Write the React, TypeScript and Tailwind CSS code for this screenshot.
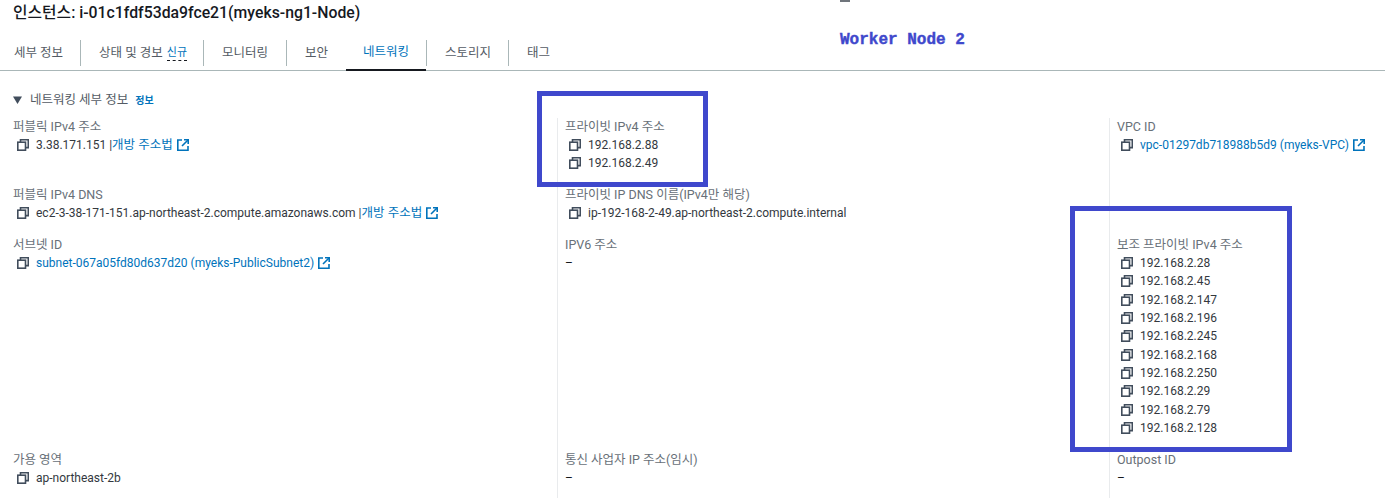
const font = { fontFamily: 'Roboto, "Noto Sans CJK KR", sans-serif' };

const tabs = ["세부 정보", "상태 및 경보", "모니터링", "보안", "네트워킹", "스토리지", "태그"];

const secondaryIps = [
  "192.168.2.28",
  "192.168.2.45",
  "192.168.2.147",
  "192.168.2.196",
  "192.168.2.245",
  "192.168.2.168",
  "192.168.2.250",
  "192.168.2.29",
  "192.168.2.79",
  "192.168.2.128",
];

function CopyIcon() {
  return (
    <svg width="12" height="12" viewBox="0 0 12 12" fill="none" stroke="#414d5c" strokeWidth="1.6" className="shrink-0">
      <rect x="0.8" y="3.2" width="7.7" height="8" />
      <path d="M3.5 3V0.8H11.3V8.6H8.7" />
    </svg>
  );
}

function ExternalIcon() {
  return (
    <svg width="12" height="12" viewBox="0 0 12 12" fill="none" stroke="#0073bb" strokeWidth="1.6" className="ml-1 shrink-0">
      <path d="M5 1H0.8V11.2H11V7" />
      <path d="M7 0.8H11.2V5" />
      <path d="M11 1L5 7" />
    </svg>
  );
}

function Label({ children }: { children: React.ReactNode }) {
  return <div className="h-[18px] text-[12.5px] leading-[18px] text-[#687078]">{children}</div>;
}

function CopyRow({ children }: { children: React.ReactNode }) {
  return (
    <div className="flex h-[18.3px] items-center text-xs text-[#33383e]">
      <div className="ml-1 mr-[7px] flex w-3 justify-center">
        <CopyIcon />
      </div>
      {children}
    </div>
  );
}

function Link({ children }: { children: React.ReactNode }) {
  return <span className="text-[#0073bb]">{children}</span>;
}

function Field({ label, children }: { label: string; children?: React.ReactNode }) {
  return (
    <div>
      <Label>{label}</Label>
      {children}
    </div>
  );
}

function Column({ children, divider }: { children: React.ReactNode; divider?: boolean }) {
  return (
    <div className={`grid grid-rows-[68px_50px_215px_1fr] ${divider ? "border-l border-[#e9ebed] pl-[7px]" : ""}`}>
      {children}
    </div>
  );
}

export default function App() {
  return (
    <div className="relative h-[498px] w-[1385px] overflow-hidden bg-white" style={font}>
      <div className="absolute left-[840px] top-0 h-[2px] w-[10px] bg-[#70757c]" />
      <div
        className="absolute left-[840px] top-[30px] text-base font-bold leading-5 text-[#3f48cc] [-webkit-text-stroke:0.4px_#3f48cc]"
        style={{ fontFamily: '"Liberation Mono", monospace' }}
      >
        Worker Node 2
      </div>

      <h1 className="pl-[13px] pt-[2px] text-[15.8px] font-medium leading-[22px] text-[#16191f]">
        인스턴스: i-01c1fdf53da9fce21(myeks-ng1-Node)
      </h1>

      <div className="mt-[16px] flex h-[31px] items-start border-b border-[#aab7b8]">
        {tabs.map((tab, i) => {
          const active = tab === "네트워킹";
          if (active) {
            return (
              <div
                key={tab}
                className="ml-px flex h-[31px] w-[80px] items-center justify-center border-b-[2px] border-[#16191f] pb-[4px] text-[12.5px] text-[#0073bb]"
              >
                {tab}
              </div>
            );
          }
          return (
            <div
              key={tab}
              className={`flex h-[26px] items-center text-[12.5px] text-[#545b64] ${i === 0 ? "pl-[14px] pr-[17px]" : "border-l border-[#aab7b8] pl-[18px]"} ${i === 1 ? "pr-4" : ""} ${i === 3 || i === 5 ? "pr-[17px]" : ""} ${i === 2 || i === 6 ? "pr-[18px]" : ""}`}
            >
              {tab}
              {i === 1 && (
                <span className="ml-1 border-b border-dashed border-[#16191f] text-[11px] leading-[14px] text-[#0073bb]">
                  신규
                </span>
              )}
            </div>
          );
        })}
      </div>

      <div className="mt-[19px] flex h-5 items-center pl-[13px]">
        <svg width="9" height="8" viewBox="0 0 9 8" className="mr-2 shrink-0">
          <path d="M0 0.5H9L4.5 8Z" fill="#414d5c" />
        </svg>
        <span className="text-[12.5px] text-[#545b64]">네트워킹 세부 정보</span>
        <span className="ml-[7px] text-[10px] font-semibold text-[#0073bb]">정보</span>
      </div>

      <div className="mt-[8px] grid h-[380px] grid-cols-[544px_552px_276px] pl-[13px]">
        <Column>
          <Field label="퍼블릭 IPv4 주소">
            <CopyRow>
              3.38.171.151 |<Link><span className="text-[12.5px]">개방 주소법</span></Link>
              <ExternalIcon />
            </CopyRow>
          </Field>
          <Field label="퍼블릭 IPv4 DNS">
            <CopyRow>
              ec2-3-38-171-151.ap-northeast-2.compute.amazonaws.com |<Link><span className="text-[12.5px]">개방 주소법</span></Link>
              <ExternalIcon />
            </CopyRow>
          </Field>
          <Field label="서브넷 ID">
            <CopyRow>
              <Link>subnet-067a05fd80d637d20 (myeks-PublicSubnet2)</Link>
              <ExternalIcon />
            </CopyRow>
          </Field>
          <Field label="가용 영역">
            <CopyRow>ap-northeast-2b</CopyRow>
          </Field>
        </Column>
        <Column divider>
          <Field label="프라이빗 IPv4 주소">
            <CopyRow>192.168.2.88</CopyRow>
            <CopyRow>192.168.2.49</CopyRow>
          </Field>
          <Field label="프라이빗 IP DNS 이름(IPv4만 해당)">
            <CopyRow>ip-192-168-2-49.ap-northeast-2.compute.internal</CopyRow>
          </Field>
          <Field label="IPV6 주소">
            <div className="text-xs leading-[18px] text-[#16191f]">–</div>
          </Field>
          <Field label="통신 사업자 IP 주소(임시)">
            <div className="text-xs leading-[18px] text-[#16191f]">–</div>
          </Field>
        </Column>
        <Column divider>
          <Field label="VPC ID">
            <CopyRow>
              <Link>vpc-01297db718988b5d9 (myeks-VPC)</Link>
              <ExternalIcon />
            </CopyRow>
          </Field>
          <div />
          <Field label="보조 프라이빗 IPv4 주소">
            {secondaryIps.map((ip) => (
              <CopyRow key={ip}>{ip}</CopyRow>
            ))}
          </Field>
          <Field label="Outpost ID">
            <div className="text-xs leading-[18px] text-[#16191f]">–</div>
          </Field>
        </Column>
      </div>

      {/* annotation boxes drawn over the console screenshot */}
      <div className="absolute left-[537px] top-[91px] h-[96px] w-[171px] border-[5px] border-[#3f48cc]" />
      <div className="absolute left-[1070px] top-[206px] h-[246px] w-[222px] border-[5px] border-[#3f48cc]" />
    </div>
  );
}
